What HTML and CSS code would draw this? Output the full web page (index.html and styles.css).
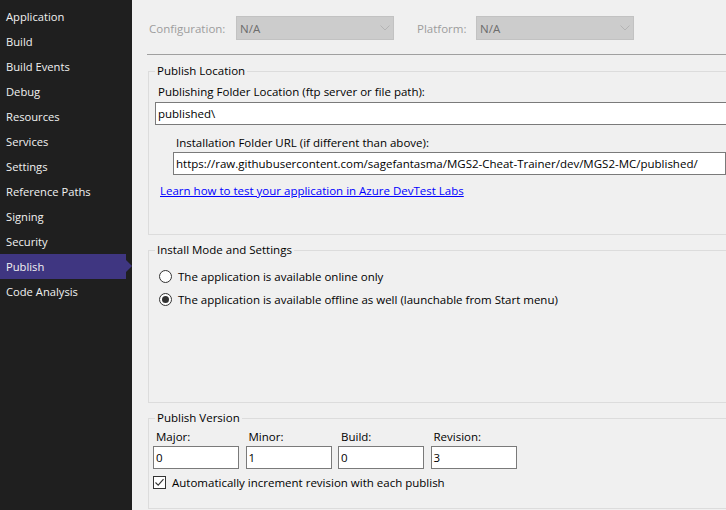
FILE: index.html
```html
<!DOCTYPE html>
<html>
<head>
<meta charset="utf-8">
<link rel="stylesheet" href="styles.css">
</head>
<body>
<nav class="sidebar">
  <div class="nav-item">Application</div>
  <div class="nav-item">Build</div>
  <div class="nav-item">Build Events</div>
  <div class="nav-item">Debug</div>
  <div class="nav-item">Resources</div>
  <div class="nav-item">Services</div>
  <div class="nav-item">Settings</div>
  <div class="nav-item">Reference Paths</div>
  <div class="nav-item">Signing</div>
  <div class="nav-item">Security</div>
  <div class="nav-item active">Publish</div>
  <div class="nav-item">Code Analysis</div>
</nav>
<main class="main">
  <div class="topbar">
    <span class="top-label">Configuration:</span>
    <div class="combo"><span>N/A</span><svg class="chev" width="10" height="6" viewBox="0 0 10 6"><path d="M0.5 0.5 L5 5 L9.5 0.5" fill="none" stroke="#b4b4b4" stroke-width="1"/></svg></div>
    <span class="top-label platform">Platform:</span>
    <div class="combo"><span>N/A</span><svg class="chev" width="10" height="6" viewBox="0 0 10 6"><path d="M0.5 0.5 L5 5 L9.5 0.5" fill="none" stroke="#b4b4b4" stroke-width="1"/></svg></div>
  </div>
  <div class="rule"></div>

  <section class="group g-location">
    <div class="legend">Publish Location</div>
    <div class="label l-folder">Publishing Folder Location (ftp server or file path):</div>
    <div class="textbox tb-folder">published\</div>
    <div class="label l-url">Installation Folder URL (if different than above):</div>
    <div class="textbox tb-url">https://raw.githubusercontent.com/sagefantasma/MGS2-Cheat-Trainer/dev/MGS2-MC/published/</div>
    <a class="link" href="#">Learn how to test your application in Azure DevTest Labs</a>
  </section>

  <section class="group g-mode">
    <div class="legend">Install Mode and Settings</div>
    <div class="radio-row r1"><span class="radio"></span><span>The application is available online only</span></div>
    <div class="radio-row r2"><span class="radio checked"></span><span>The application is available offline as well (launchable from Start menu)</span></div>
  </section>

  <section class="group g-version">
    <div class="legend">Publish Version</div>
    <div class="version-row">
      <div class="vcol"><div class="vlabel">Major:</div><div class="textbox vbox">0</div></div>
      <div class="vcol"><div class="vlabel">Minor:</div><div class="textbox vbox">1</div></div>
      <div class="vcol"><div class="vlabel">Build:</div><div class="textbox vbox">0</div></div>
      <div class="vcol"><div class="vlabel">Revision:</div><div class="textbox vbox">3</div></div>
    </div>
    <div class="check-row">
      <span class="checkbox"><svg width="11" height="11" viewBox="0 0 11 11"><path d="M1.5 5.5 L4.2 8.2 L9.5 2.2" fill="none" stroke="#333" stroke-width="1.1"/></svg></span>
      <span>Automatically increment revision with each publish</span>
    </div>
  </section>
</main>
</body>
</html>
```

FILE: styles.css
```css
* { box-sizing: border-box; }
html, body {
  margin: 0;
  padding: 0;
  width: 726px;
  height: 510px;
  overflow: hidden;
}
body {
  display: flex;
  font-family: "Open Sans", "Noto Sans", sans-serif;
  font-size: 11.5px;
  color: #000;
  background: #f0f0f0;
}
.sidebar {
  width: 132px;
  flex: none;
  background: #1f1f1f;
  padding-top: 4px;
}
.nav-item {
  height: 25px;
  line-height: 25px;
  padding-left: 6px;
  color: #f1f1f1;
  width: 126px;
  position: relative;
  font-size: 11.2px;
}
.nav-item.active {
  background: #3f3681;
}
.nav-item.active::after {
  content: "";
  position: absolute;
  left: 126px;
  top: 6px;
  border-top: 6px solid transparent;
  border-bottom: 6px solid transparent;
  border-left: 6px solid #3f3681;
}
.main {
  flex: 1;
  overflow: hidden;
  background: #f0f0f0;
}
.topbar {
  display: flex;
  align-items: center;
  padding-top: 16px;
  padding-left: 17px;
  height: 40px;
}
.top-label {
  color: #9d9d9d;
  width: 87px;
}
.top-label.platform {
  margin-left: 23px;
  width: 59px;
}
.combo {
  width: 158px;
  height: 24px;
  background: #cccccc;
  border: 1px solid #c2c2c2;
  color: #6d6d6d;
  display: flex;
  align-items: center;
  justify-content: space-between;
  padding: 0 3px 0 3px;
}
.rule {
  margin: 14px 0 0 15px;
  height: 1px;
  background: #a0a0a0;
  width: 600px;
}
.group {
  margin-left: 16px;
  width: 620px;
  border: 1px solid #dcdcdc;
}
.g-location { margin-top: 16px; height: 164px; }
.g-mode { margin-top: 15px; height: 153px; }
.g-version { margin-top: 15px; height: 91px; }
.legend {
  display: block;
  width: fit-content;
  margin: -9px 0 0 6px;
  padding: 0 2px;
  line-height: 16px;
  background: #f0f0f0;
}
.label {
  line-height: 16px;
}
.l-folder { margin: 5px 0 0 9px; }
.textbox {
  background: #fff;
  border: 1px solid #7a7a7a;
  height: 23px;
  line-height: 21px;
  padding-left: 2px;
  white-space: nowrap;
  overflow: hidden;
}
.tb-folder { margin: 2px 0 0 6px; width: 620px; }
.l-url { margin: 10px 0 0 27px; }
.tb-url { margin: 1px 0 0 24px; width: 553px; }
.link {
  display: inline-block;
  margin: 8px 0 0 11px;
  line-height: 16px;
  color: #0000ff;
  text-decoration: underline;
}
.radio-row {
  display: flex;
  align-items: center;
  height: 20px;
  margin-left: 10px;
}
.r1 { margin-top: 8px; }
.r2 { margin-top: 3px; }
.radio {
  width: 13px;
  height: 13px;
  border: 1px solid #333;
  border-radius: 50%;
  background: #fff;
  margin-right: 6px;
  display: flex;
  align-items: center;
  justify-content: center;
}
.radio.checked::before {
  content: "";
  width: 7px;
  height: 7px;
  border-radius: 50%;
  background: #333;
}
.version-row {
  display: flex;
  gap: 6.5px;
  margin: 3px 0 0 4px;
}
.vcol { width: 86px; }
.vlabel {
  line-height: 16px;
  padding-left: 3px;
}
.vbox { margin-top: 1px; }
.check-row {
  display: flex;
  align-items: center;
  height: 20px;
  margin: 3px 0 0 4px;
}
.checkbox {
  width: 13px;
  height: 13px;
  border: 1px solid #333;
  background: #fff;
  margin-right: 6px;
  display: flex;
  align-items: center;
  justify-content: center;
}
```
